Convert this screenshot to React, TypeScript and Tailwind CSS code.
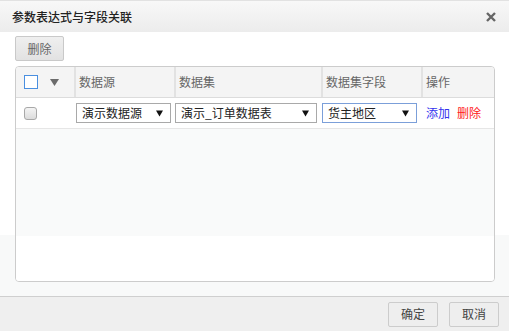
const FONT = "font-['Noto_Sans_CJK_SC','Noto_Sans',sans-serif]";

function SelectBox({ label, width, focused }: { label: string; width: string; focused?: boolean }) {
  return (
    <div
      className={`flex h-[20px] ${width} items-center justify-between border bg-white pl-[5px] pr-[7px] text-[12px] leading-none text-[#222] ${
        focused ? "border-[#7b9fd9]" : "border-[#a9a9a9]"
      }`}
    >
      <span>{label}</span>
      <svg width="7" height="7" viewBox="0 0 7 7">
        <path d="M0 0.5H7L3.5 6.5Z" fill="#111" />
      </svg>
    </div>
  );
}

export default function App() {
  return (
    <div className={`flex h-[331px] w-[509px] flex-col bg-white text-[12px] ${FONT}`}>
      {/* title bar */}
      <div className="flex h-[32px] shrink-0 items-center justify-between border-t border-[#e2e2e2] bg-[linear-gradient(to_bottom,#f8f8f8,#ececec)] pl-[12px] pr-[13px]">
        <span className="text-[12px] font-medium text-[#222]">参数表达式与字段关联</span>
        <svg width="10" height="10" viewBox="0 0 10 10" className="text-[#666]">
          <path d="M1 1L9 9M9 1L1 9" stroke="currentColor" strokeWidth="2.4" />
        </svg>
      </div>

      {/* body */}
      <div className="flex flex-1 flex-col bg-[linear-gradient(to_bottom,#ffffff_203px,#f8f9f9_203px)] px-[15px] pt-[4px]">
        <button className="h-[25px] w-[49px] rounded-[2px] border border-[#c9c9c9] bg-[linear-gradient(to_bottom,#efefef,#e2e2e2)] text-[12px] text-[#666]">
          删除
        </button>

        <div className="mt-[5px] flex h-[216px] w-[480px] flex-col overflow-hidden rounded-[4px] border border-[#cccccc]">
          {/* header */}
          <div className="grid h-[31px] shrink-0 grid-cols-[58px_100px_147px_100px_1fr] border-b border-[#dcdcdc] bg-[#f4f4f4] text-[#666]">
            <div className="flex items-center gap-[12px] pl-[8px]">
              <span className="h-[14px] w-[14px] border border-[#4a8fe0] bg-white" />
              <svg width="9" height="7" viewBox="0 0 9 7">
                <path d="M0 0H9L4.5 7Z" fill="#6b6b6b" />
              </svg>
            </div>
            <div className="flex items-center border-l-2 border-[#e2e2e2] pl-[3px]">数据源</div>
            <div className="flex items-center border-l-2 border-[#e2e2e2] pl-[3px]">数据集</div>
            <div className="flex items-center border-l-2 border-[#e2e2e2] pl-[3px]">数据集字段</div>
            <div className="flex items-center border-l-2 border-[#e2e2e2] pl-[3px]">操作</div>
          </div>

          {/* row */}
          <div className="flex h-[31px] shrink-0 items-center border-b border-[#e6e6e6] bg-white">
            <span className="ml-[8px] h-[13px] w-[13px] rounded-[3px] border border-[#a8a8a8] bg-[linear-gradient(to_bottom,#f4f4f4,#dcdcdc)]" />
            <div className="ml-[39px]">
              <SelectBox label="演示数据源" width="w-[95px]" />
            </div>
            <div className="ml-[4px]">
              <SelectBox label="演示_订单数据表" width="w-[142px]" />
            </div>
            <div className="ml-[5px]">
              <SelectBox label="货主地区" width="w-[95px]" focused />
            </div>
            <span className="ml-[9px] text-[#3333ee]">添加</span>
            <span className="ml-[7px] text-[#ff2020]">删除</span>
          </div>

          {/* empty */}
          <div className="h-[107px] shrink-0 bg-[#f9fafa]" />
          <div className="flex-1 bg-white" />
        </div>
      </div>

      {/* footer */}
      <div className="flex h-[35px] shrink-0 items-center justify-end gap-[11px] border-t border-[#cfcfcf] bg-[#efefef] pr-[10px]">
        <button className="h-[25px] w-[50px] rounded-[2px] border border-[#cccccc] bg-[#eeeeee] text-[12px] text-[#444]">
          确定
        </button>
        <button className="h-[25px] w-[50px] rounded-[2px] border border-[#cccccc] bg-[#eeeeee] text-[12px] text-[#444]">
          取消
        </button>
      </div>
    </div>
  );
}
